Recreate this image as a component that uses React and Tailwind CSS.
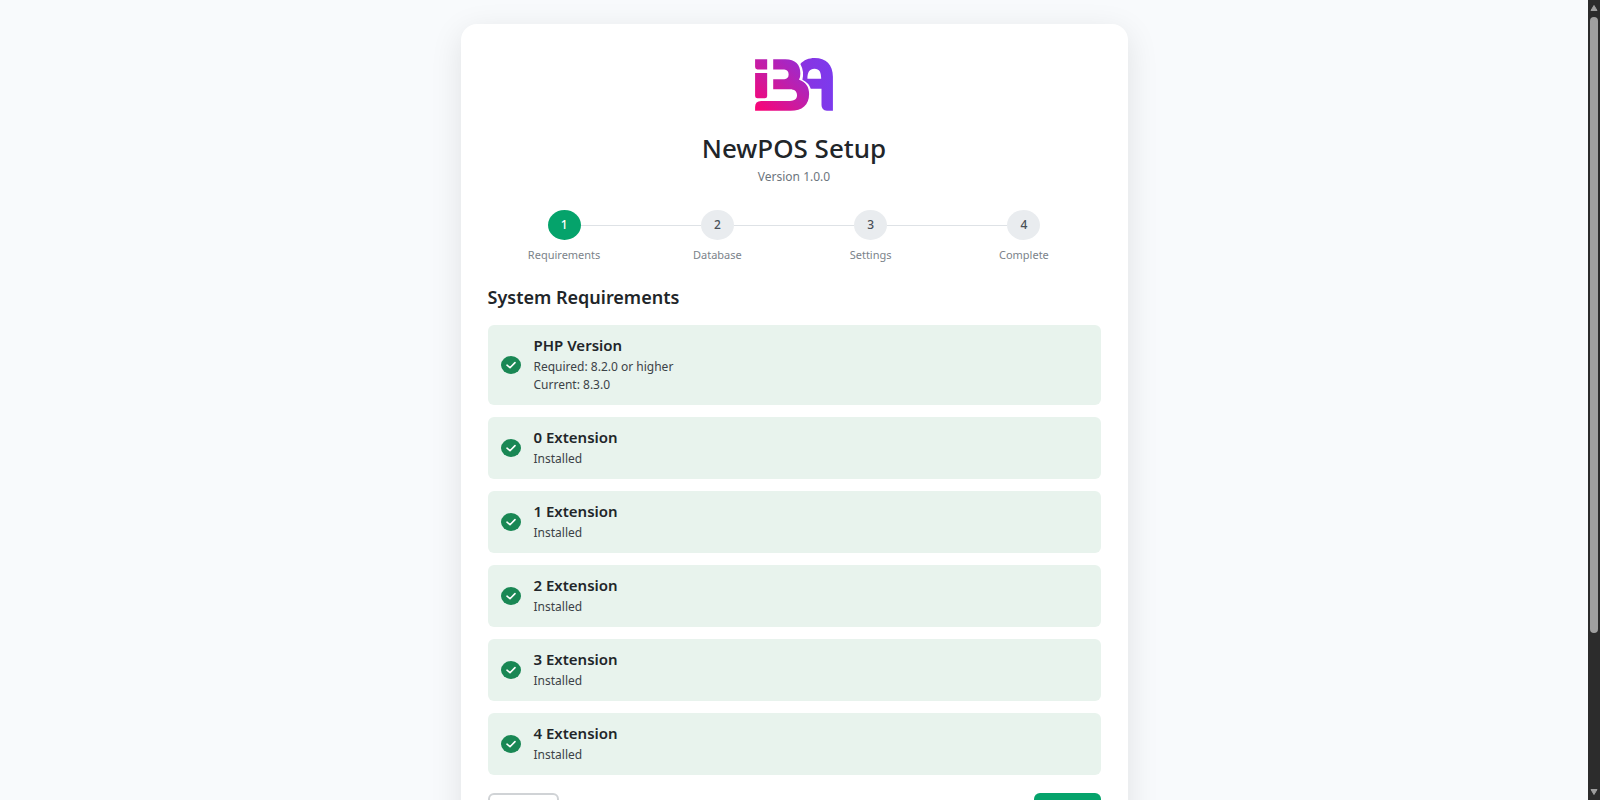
import React from 'react';

const steps = ['Requirements', 'Database', 'Settings', 'Complete'];

const requirements = [
    { name: 'PHP Version', details: ['Required: 8.2.0 or higher', 'Current: 8.3.0'] },
    { name: '0 Extension', details: ['Installed'] },
    { name: '1 Extension', details: ['Installed'] },
    { name: '2 Extension', details: ['Installed'] },
    { name: '3 Extension', details: ['Installed'] },
    { name: '4 Extension', details: ['Installed'] },
];

const Logo = () => (
    <svg viewBox="46 38 232 158" className="w-[78px] h-[53px]" role="img" aria-label="IBA">
        <defs>
            <linearGradient id="logoPink" gradientUnits="userSpaceOnUse" x1="50" y1="195" x2="185" y2="50">
                <stop offset="0" stopColor="#fb0475" />
                <stop offset="0.5" stopColor="#c81ba2" />
                <stop offset="1" stopColor="#9a2bd0" />
            </linearGradient>
            <linearGradient id="logoPurple" gradientUnits="userSpaceOnUse" x1="180" y1="90" x2="278" y2="90">
                <stop offset="0" stopColor="#8a33e0" />
                <stop offset="1" stopColor="#7c3aed" />
            </linearGradient>
        </defs>
        <g fill="url(#logoPink)">
            <path d="M46 42H82V72H53Q46 72 46 65Z" />
            <path d="M46 83H82V151Q82 158 75 158H53Q46 158 46 151Z" />
            <path d="M100 42H136C166 42 181 58 181 84Q181 96 177 103C198 110 207 125 207 145C207 178 186 195 152 195H46V184Q46 166 64 166H150C163 166 171 160 171 149C171 137 163 131 150 131H100V101H133Q146 100 146 87Q146 73 133 72H100Z" />
        </g>
        <path
            fill="url(#logoPurple)"
            fillRule="evenodd"
            d="M181 56C191 44 206 38 224 38C257 38 278 58 278 94V195H260Q244 194 244 178V130H212Q206 112 187 103Q193 78 181 56ZM202 100H243C243 80 238 70 223 70C208 70 202 80 202 100Z"
        />
    </svg>
);

const CheckIcon = () => (
    <svg viewBox="0 0 20 18" className="w-5 h-[18px] shrink-0" aria-hidden="true">
        <ellipse cx="10" cy="9" rx="10" ry="9" fill="#198754" />
        <path d="M6 9.2L9 11.7L14 6.6" fill="none" stroke="#fff" strokeWidth="1.6" strokeLinecap="round" strokeLinejoin="round" />
    </svg>
);

const Stepper = () => (
    <ol className="flex mt-6">
        {steps.map((label, index) => (
            <li key={label} className="flex-1 flex flex-col items-center">
                <div className="w-full flex items-center">
                    <span className={`flex-1 h-px ${index === 0 ? '' : 'bg-[#dee2e6]'}`} />
                    <span
                        className={`w-[33px] h-[30px] rounded-[50%] flex items-center justify-center text-[12px] font-medium ${
                            index === 0 ? 'bg-[#05a36b] text-white' : 'bg-[#e9ecef] text-[#495057]'
                        }`}
                    >
                        {index + 1}
                    </span>
                    <span className={`flex-1 h-px ${index === steps.length - 1 ? '' : 'bg-[#dee2e6]'}`} />
                </div>
                <span className="mt-[7px] text-[11px] leading-4 text-[#7b838a]">{label}</span>
            </li>
        ))}
    </ol>
);

const RequirementItem = ({ item }) => (
    <li className="flex items-center gap-[13px] px-[13px] pt-[10px] pb-[11px] rounded-md bg-[#e8f3ed]">
        <CheckIcon />
        <div>
            <h3 className="mb-[3px] text-[15px] leading-5 font-semibold text-[#212529]">{item.name}</h3>
            {item.details.map((line) => (
                <p key={line} className="text-[12px] leading-[18px] text-[#3c4247]">{line}</p>
            ))}
        </div>
    </li>
);

// Dark scroll track on the right edge of the window
const ScrollTrack = () => (
    <div className="w-3 shrink-0 flex flex-col items-center bg-[#2c2c2c]" aria-hidden="true">
        <svg viewBox="0 0 12 17" className="w-3 h-[17px]">
            <path d="M6 5.5L9 10.5H3Z" fill="#9f9f9f" stroke="#9f9f9f" strokeLinejoin="round" />
        </svg>
        <div className="w-2 h-[77%] rounded-full bg-[#9f9f9f]" />
        <svg viewBox="0 0 12 17" className="w-3 h-[17px] mt-auto">
            <path d="M6 11.5L9 6.5H3Z" fill="#9f9f9f" stroke="#9f9f9f" strokeLinejoin="round" />
        </svg>
    </div>
);

const App = () => {
    return (
        <div className="h-screen flex overflow-hidden bg-[#f8fafc] font-['Noto_Sans','Open_Sans',sans-serif]">
            <div className="flex-1 overflow-hidden px-4 py-6">
                <main className="max-w-[667px] mx-auto px-[27px] pt-[34px] pb-8 bg-white rounded-2xl shadow-[0_8px_32px_rgba(0,0,0,0.1)]">
                    <header className="flex flex-col items-center">
                        <Logo />
                        <h1 className="mt-[21px] text-[26px] leading-8 font-medium text-[#212529]">NewPOS Setup</h1>
                        <p className="mt-1 text-[12px] leading-[18px] text-[#6c757d]">Version 1.0.0</p>
                    </header>

                    <Stepper />

                    <h2 className="mt-[22px] text-[18px] leading-6 font-semibold text-[#212529]">System Requirements</h2>
                    <ul className="mt-4 flex flex-col gap-3">
                        {requirements.map((item) => (
                            <RequirementItem key={item.name} item={item} />
                        ))}
                    </ul>

                    <div className="mt-[18px] flex justify-between">
                        <button type="button" className="w-[71px] h-12 rounded-md border-2 border-[#d0d3d6] text-[13px] text-[#495057]">
                            Back
                        </button>
                        <button type="button" className="w-[67px] h-12 rounded-md bg-[#05a36b] text-[13px] text-white">
                            Next
                        </button>
                    </div>
                </main>
            </div>
            <ScrollTrack />
        </div>
    );
};

export default App;
